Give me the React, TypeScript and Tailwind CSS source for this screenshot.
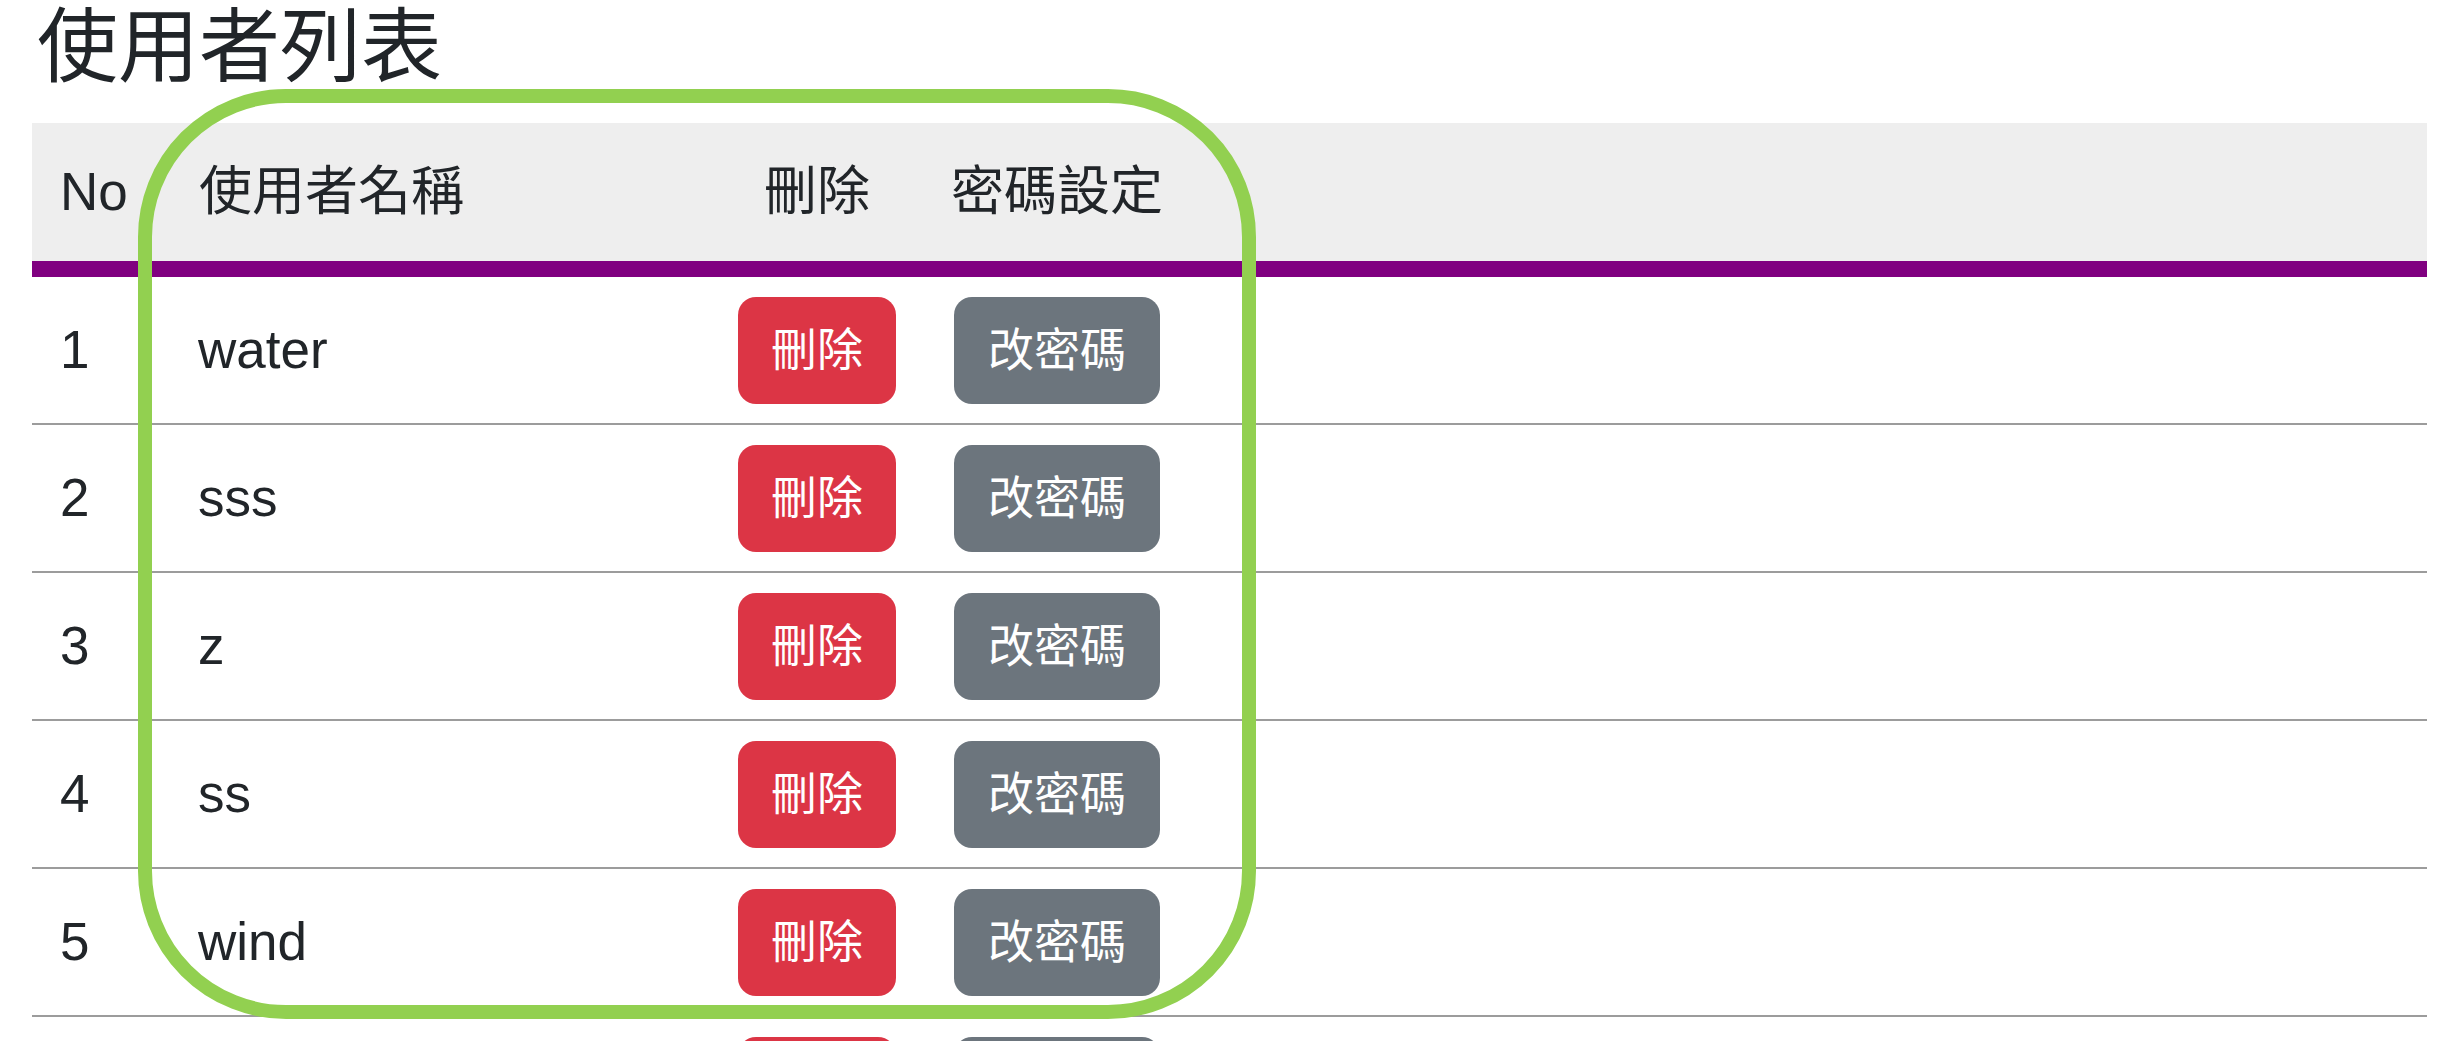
import React from "react";

const users = [
  { no: 1, name: "water" },
  { no: 2, name: "sss" },
  { no: 3, name: "z" },
  { no: 4, name: "ss" },
  { no: 5, name: "wind" },
  { no: 6, name: "fire" },
];

const font = {
  fontFamily:
    '"Liberation Sans", Arial, "Noto Sans CJK TC", "Noto Sans CJK SC", sans-serif',
};

export default function App() {
  return (
    <div
      className="relative w-[2448px] h-[1041px] overflow-hidden bg-white text-[#212529]"
      style={font}
    >
      <h1 className="h-[123px] pt-[7px] pl-[37px] text-[81px] leading-[80px] font-normal">
        使用者列表
      </h1>

      <div className="ml-[32px] w-[2395px]">
        {/* header */}
        <div className="flex h-[154px] bg-[#eeeeee] border-b-[16px] border-[#800080] text-[53px] leading-normal">
          <div className="w-[138px] shrink-0 flex items-center pl-[28px]">No</div>
          <div className="w-[537px] shrink-0 flex items-center pl-[29px]">使用者名稱</div>
          <div className="w-[220px] shrink-0 flex items-center justify-center">刪除</div>
          <div className="w-[260px] shrink-0 flex items-center justify-center">密碼設定</div>
          <div className="flex-1" />
        </div>

        {/* rows */}
        {users.map((u) => (
          <div
            key={u.no}
            className="flex h-[148px] border-b-2 border-[#9c9c9c] text-[53px] leading-normal"
          >
            <div className="w-[138px] shrink-0 flex items-center pl-[28px]">{u.no}</div>
            <div className="w-[537px] shrink-0 flex items-center pl-[28px]">{u.name}</div>
            <div className="w-[220px] shrink-0 flex items-center justify-center">
              <button className="w-[158px] h-[107px] rounded-[18px] bg-[#dc3545] text-white text-[46px] leading-normal flex items-center justify-center">
                刪除
              </button>
            </div>
            <div className="w-[260px] shrink-0 flex items-center justify-center">
              <button className="w-[206px] h-[107px] rounded-[18px] bg-[#6c757d] text-white text-[46px] leading-normal flex items-center justify-center">
                改密碼
              </button>
            </div>
            <div className="flex-1" />
          </div>
        ))}
      </div>

      {/* green highlight outline */}
      <div className="pointer-events-none absolute left-[138px] top-[89px] w-[1118px] h-[930px] rounded-[148px] border-[14px] border-[#92d050]" />
    </div>
  );
}
